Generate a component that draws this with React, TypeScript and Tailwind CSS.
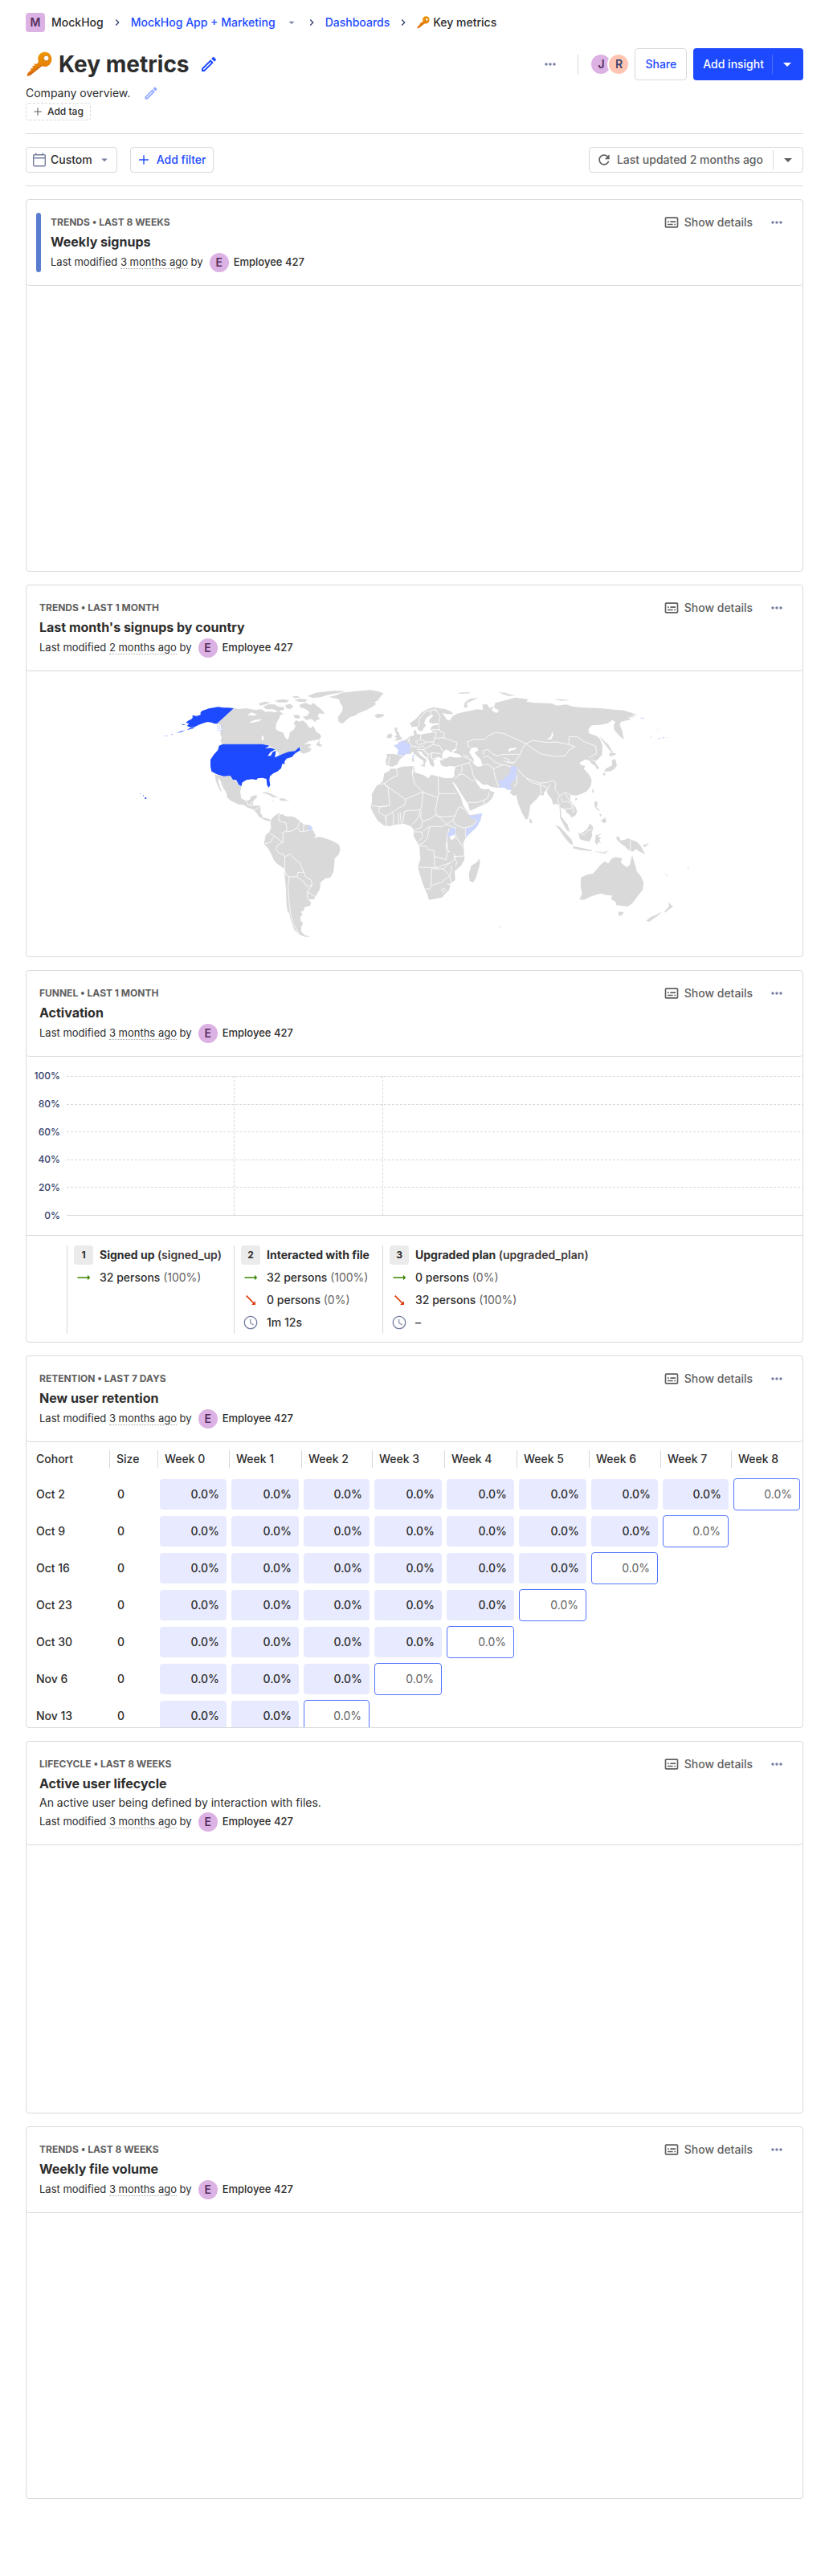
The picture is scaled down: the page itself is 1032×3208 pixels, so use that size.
import type { ReactNode } from "react";

type GlyphProps = { d: string; className?: string };

function Glyph({ d, className = "size-5" }: GlyphProps) {
  return (
    <svg viewBox="0 0 24 24" fill="currentColor" aria-hidden="true" className={`shrink-0 ${className}`}>
      <path d={d} />
    </svg>
  );
}

const PENCIL =
  "M14.06 9l.94.94L5.92 19H5v-.92L14.06 9m3.6-6c-.25 0-.51.1-.7.29l-1.83 1.83 3.75 3.75 1.83-1.83c.39-.39.39-1.04 0-1.41l-2.34-2.34c-.2-.2-.45-.29-.71-.29m-3.6 3.19L3 17.25V21h3.75L17.81 9.94l-3.75-3.75z";
const SUBTITLES =
  "M20 4H4c-1.100 0-2 .9-2 2v12c0 1.100.9 2 2 2h16c1.100 0 2-.9 2-2V6c0-1.100-.9-2-2-2zm0 14H4V6h16v12zM6 10h2v2H6zm0 4h8v2H6zm10 0h2v2h-2zm-6-4h8v2h-8z";
const DOTS =
  "M6 10c-1.100 0-2 .9-2 2s.9 2 2 2 2-.9 2-2-.9-2-2-2zm12 0c-1.100 0-2 .9-2 2s.9 2 2 2 2-.9 2-2-.9-2-2-2zm-6 0c-1.100 0-2 .9-2 2s.9 2 2 2 2-.9 2-2-.9-2-2-2z";
const CARET = "M7 10l5 5 5-5z";
const CHEVRON = "M10 6L8.590 7.410 13.170 12l-4.580 4.590L10 18l6-6z";
const PLUS = "M19 12.800h-6.200V19h-1.600v-6.200H5v-1.600h6.200V5h1.600v6.200H19z";
const REFRESH =
  "M17.650 6.350C16.200 4.900 14.210 4 12 4c-4.420 0-7.990 3.580-7.990 8s3.570 8 7.990 8c3.730 0 6.840-2.550 7.730-6h-2.080c-.82 2.330-3.040 4-5.650 4-3.310 0-6-2.690-6-6s2.690-6 6-6c1.660 0 3.140.69 4.220 1.780L13 11h7V4l-2.350 2.350z";
const ARROW = "M22 12l-4-4v3H3v2h15v3z";
const CLOCK =
  "M11.990 2C6.470 2 2 6.480 2 12s4.470 10 9.990 10C17.520 22 22 17.520 22 12S17.520 2 11.990 2zM12 20.400c-4.640 0-8.400-3.760-8.400-8.400S7.360 3.600 12 3.600s8.400 3.760 8.400 8.400-3.760 8.400-8.400 8.400zm.3-13.400h-1.300v6l5 3.100.7-1.100-4.400-2.700z";

function Key({ className }: { className: string }) {
  return (
    <svg viewBox="0 0 96 96" aria-hidden="true" className={`shrink-0 ${className}`}>
      <defs>
        <linearGradient id="key-body" x1="0" y1="0" x2="0" y2="1">
          <stop offset="0" stopColor="#ee9700" />
          <stop offset="1" stopColor="#e07010" />
        </linearGradient>
      </defs>
      <path
        fillRule="evenodd"
        fill="url(#key-body)"
        d="M69 2C53 2 42 14 43 29c0 4 1 7 2 10L38 47l-9-1 1 8-8 0 2 9-8 0 0 8-6 4L3 84l-1 9 11-3L57 55c3 1 6 2 10 2 15 0 27-12 27-28C94 14 84 2 69 2zM74 16a9.500 9.500 0 1 1 0 19 9.500 9.500 0 0 1 0-19z"
      />
      <path d="M13 90L57 55l-3-3L8 88z" fill="#c96a12" />
      <circle cx="74" cy="25.500" r="10" fill="none" stroke="#b96a1a" strokeWidth="2" />
    </svg>
  );
}

function CalendarIcon() {
  return (
    <svg viewBox="0 0 16 18" fill="none" stroke="#747ea1" strokeWidth="1.400" aria-hidden="true" className="h-[18px] w-4 shrink-0">
      <rect x="0.7" y="2.700" width="14.600" height="14" rx="1.200" />
      <path d="M1 6.700h14M3.700 0.500v2.500M12.300 0.500v2.500" />
    </svg>
  );
}

function Avatar({ letter, className }: { letter: string; className: string }) {
  return (
    <span className={`inline-flex size-6 shrink-0 items-center justify-center text-sm font-semibold ${className}`}>{letter}</span>
  );
}

function Breadcrumbs() {
  const chevron = <Glyph d={CHEVRON} className="mx-[9px] size-4 text-[#35416b]" />;
  return (
    <nav aria-label="Breadcrumb" className="flex h-[56px] items-center text-sm leading-5 font-medium">
      <Avatar letter="M" className="mr-2 rounded-sm bg-[#dcb1e3] text-[#572e5e]" />
      <span>MockHog</span>
      {chevron}
      <a href="#project" className="text-[#1d4aff]">
        MockHog App + Marketing
      </a>
      <button type="button" aria-label="Switch project" className="ml-3 text-[#747ea1]">
        <Glyph d={CARET} className="size-4" />
      </button>
      {chevron}
      <a href="#dashboards" className="text-[#1d4aff]">
        Dashboards
      </a>
      {chevron}
      <Key className="mr-1 size-4" />
      <span>Key metrics</span>
    </nav>
  );
}

function PageHeader() {
  return (
    <header className="border-b border-[#d9d9d9] pb-4">
      <div className="flex h-12 items-center justify-between">
        <div className="flex items-center">
          <h1 className="flex items-center gap-2 text-[28px] leading-8 font-bold">
            <Key className="ml-px size-8" />
            Key metrics
          </h1>
          <button type="button" aria-label="Edit name" className="ml-3 text-[#1d4aff]">
            <Glyph d={PENCIL} className="size-6" />
          </button>
        </div>
        <div className="flex items-center text-sm font-medium">
          <button type="button" aria-label="More options" className="px-3 text-[#747ea1]">
            <Glyph d={DOTS} />
          </button>
          <span className="mr-4 ml-3 h-6 w-px bg-[#d9d9d9]" />
          <Avatar letter="J" className="rounded-full bg-[#dcb1e3] text-[#572e5e]" />
          <Avatar letter="R" className="-ml-0.5 rounded-full bg-[#ffc4b2] text-[#35416b] ring-2 ring-white" />
          <button type="button" className="ml-2 h-10 rounded border border-[#d9d9d9] px-3 text-[#1d4aff]">
            Share
          </button>
          <div className="ml-2 flex h-10 items-center rounded bg-[#1d4aff] text-white">
            <button type="button" className="h-10 pr-2.5 pl-3">
              Add insight
            </button>
            <span className="h-6 w-px bg-white/20" />
            <button type="button" aria-label="More ways to add" className="pr-2 pl-1.5">
              <Glyph d={CARET} className="size-6" />
            </button>
          </div>
        </div>
      </div>
      <div className="flex h-6 items-center text-sm">
        <p>Company overview.</p>
        <button type="button" aria-label="Edit description" className="ml-4 text-[#8ea5ff]">
          <Glyph d={PENCIL} />
        </button>
      </div>
      <button type="button" className="flex h-[22px] items-center rounded border border-dashed border-[#d9d9d9] px-2 text-xs font-medium">
        <Glyph d={PLUS} className="-ml-0.5 mr-1 size-4 text-[#5f5f5f]" />
        Add tag
      </button>
    </header>
  );
}

function FilterBar() {
  return (
    <div className="flex items-center justify-between border-b border-[#d9d9d9] py-4 text-sm font-medium">
      <div className="flex gap-4">
        <button type="button" className="flex h-8 items-center rounded border border-[#d9d9d9] pr-1.5 pl-2">
          <CalendarIcon />
          <span className="mx-1.5">Custom</span>
          <Glyph d={CARET} className="size-[18px] text-[#747ea1]" />
        </button>
        <button type="button" className="flex h-8 items-center gap-1.5 rounded border border-[#d9d9d9] px-1.5 pr-2 text-[#1d4aff]">
          <Glyph d={PLUS} />
          Add filter
        </button>
      </div>
      <div className="flex h-8 items-center rounded border border-[#d9d9d9] text-[#5f5f5f]">
        <button type="button" className="flex items-center gap-1.5 pr-3 pl-2">
          <Glyph d={REFRESH} />
          Last updated 2 months ago
        </button>
        <span className="h-6 w-px bg-[#d9d9d9]" />
        <button type="button" aria-label="Refresh settings" className="px-1.5">
          <Glyph d={CARET} className="size-6" />
        </button>
      </div>
    </div>
  );
}

type CardProps = {
  meta: string;
  title: string;
  when?: string;
  description?: string;
  ribbon?: boolean;
  children?: ReactNode;
};

function InsightCard({ meta, title, when = "3 months ago", description, ribbon, children }: CardProps) {
  return (
    <section className="flex h-[464px] flex-col overflow-hidden rounded border border-[#d9d9d9]">
      <div className={`flex shrink-0 rounded-b border-b border-[#d9d9d9] py-4 pr-4 ${ribbon ? "pl-3" : "pl-4"}`}>
        {ribbon && <span className="mr-3 w-1.5 rounded bg-[#597dce]" />}
        <div className="min-w-0 flex-1">
          <div className="flex h-6 items-center justify-between">
            <h5 className="text-xs font-bold text-[#5f5f5f] uppercase">{meta}</h5>
            <div className="flex items-center text-[#5f5f5f]">
              <button type="button" className="flex items-center gap-1.5 text-sm font-medium">
                <Glyph d={SUBTITLES} />
                Show details
              </button>
              <button type="button" aria-label={`More actions for ${title}`} className="mr-1.5 ml-5 text-[#747ea1]">
                <Glyph d={DOTS} />
              </button>
            </div>
          </div>
          <h4 className="mb-0.5 text-base leading-6 font-bold">{title}</h4>
          {description && <p className="mb-0.5 text-sm leading-5">{description}</p>}
          <div className="flex h-6 items-center text-[13px]">
            <span>
              Last modified <span className="border-b border-dotted border-[#a8a8a8]">{when}</span> by
            </span>
            <Avatar letter="E" className="mr-1.5 ml-2 rounded-full bg-[#dcb1e3] text-[#572e5e]" />
            <span className="font-medium">Employee 427</span>
          </div>
        </div>
      </div>
      {children}
    </section>
  );
}

const WEST_LAND = [
  "M393 126L415 129 440 126 470 132 498 130 512 140 530 138 548 142 560 134 578 148 566 152 562 165 552 182 549 203 562 212 577 216 585 235 592 244 599 236 603 215 617 206 624 192 616 182 626 170 636 176 650 172 662 180 672 195 680 200 690 192 702 215 714 222 720 232 712 242 690 246 672 250 655 262 674 258 684 264 668 272 684 276 664 290 640 292 645 278 640 271 622 286 597 289 575 299 560 303 562 294 546 278 525 265 500 260 350 260 343 246 348 236 342 220 350 205 344 190 330 184z",
  "M322 373L330 376 355 380 380 378 390 393 400 395 412 412 422 417 417 438 421 462 438 472 453 468 458 455 478 450 480 458 466 472 463 490 488 490 494 494 492 514 503 535 520 538 532 544 530 549 514 545 504 542 486 530 478 516 464 503 445 497 430 487 412 486 385 473 368 460 366 444 352 420 344 398 336 386 335 398 347 437 343 436 330 408 325 392z",
  "M498 443L512 439 530 444 545 452 560 460 538 458 518 446z",
  "M564 463L580 463 592 469 604 471 580 472 566 471z",
  "M536 470L545 472 538 474z",
  "M529 545L543 530 556 520 566 518 563 527 572 521 590 530 612 530 626 536 640 548 655 560 672 562 686 572 690 585 700 603 690 612 712 606 735 612 762 622 786 636 791 655 785 672 770 688 768 715 765 738 754 758 735 762 717 776 715 800 704 820 692 840 674 840 668 836 682 852 678 864 656 870 656 882 643 886 650 896 642 906 642 918 652 930 644 944 646 962 660 974 680 980 660 980 640 972 620 955 608 925 600 890 594 886 590 860 588 800 584 760 582 726 556 708 544 695 530 665 520 648 506 632 512 600 526 588 532 572z",
  "M748 84L775 78 795 68 850 62 905 58 935 64 952 70 940 84 932 96 918 104 925 110 908 122 885 134 860 144 845 154 826 160 812 172 800 183 785 178 782 160 790 148 798 138 800 120 790 106 786 92 765 88z",
  "M918 153L928 148 948 147 956 154 944 160 928 163z",
  "M640 112L662 106 680 114 690 106 704 118 722 132 733 148 712 145 706 156 716 166 698 172 700 180 682 166 664 170 650 158 668 154 676 140 660 128 640 122z",
  "M614 152L630 150 642 156 636 166 622 162z",
  "M502 122L520 112 545 112 560 120 582 122 580 132 556 136 540 130 515 130z",
  "M485 108L510 101 530 104 512 112 492 116z",
  "M545 98L575 92 600 96 590 104 560 104z",
  "M585 114L605 110 616 120 604 130 590 126z",
  "M620 96L640 90 668 94 660 102 635 102z",
  "M668 80L700 68 735 64 770 61 812 62 780 70 745 76 720 84 690 88z",
  "M610 82L632 80 640 86 620 88z",
  "M700 262L716 244 712 258 722 262 720 270 706 266z",
  "M645 292L662 286 684 278 676 288 655 296z",
];

const BLUE_WEST = [
  "M393 126L330 184 318 183 312 180 296 177 282 181 262 188 250 194 232 198 218 192 226 184 214 180 222 173 236 166 240 160 238 152 254 155 270 150 268 144 274 136 300 127 335 121 355 124 372 124z",
  "M250 194L240 202 218 208 226 202zM210 208L200 214 178 219 190 214zM168 221l-12 5 6-1zM148 228l-14 4 6-3zM198 184l16 4-10 1z",
  "M338 266L352 260 500 260 527 266 510 276 530 274 548 280 530 290 520 304 531 304 538 290 550 284 549 296 546 310 574 298 597 289 622 286 638 271 642 283 622 295 610 308 590 314 582 326 584 334 574 334 570 350 556 362 540 370 528 380 526 394 529 414 523 423 517 412 515 390 500 386 482 388 478 394 462 391 440 394 424 404 422 417 412 412 402 394 390 393 380 378 355 380 330 373 310 362 306 344 306 318 318 300 334 282z",
  "M60 460L66 459 67 464 62 466zM42 444L46 445 43 447zM53 451L58 453 55 455z",
];

const WEST_BORDERS =
  "M560 524L562 548 588 554 592 585 576 590 577 628 545 604 526 592M545 604L528 628 510 632M577 626L556 638 550 655 563 668 583 675 583 726M592 588L612 584 632 570 640 550M632 572L640 586 652 588M655 560L652 586 690 580M583 682L603 670 622 690 640 704 655 738 632 740 630 755 600 756 590 750 582 726M655 738L660 755 682 768 685 786 665 791 652 772 630 757M685 786L668 812 698 830M668 812L668 838M600 756L596 790 600 850 604 888 614 930 636 966M440 472L444 486 462 490M462 474L450 490M494 494L470 506M503 535L500 540M530 540L530 552";

const EAST_LAND = [
  "M150 182L168 170 180 158 194 142 215 130 240 122 262 126 285 130 308 140 312 148 292 148 272 144 282 158 296 180 286 180 282 166 300 172 310 156 328 146 350 140 375 136 400 130 424 132 422 112 440 112 448 126 462 118 456 134 474 144 484 136 464 122 470 106 500 98 545 86 592 92 586 102 622 106 680 108 700 116 735 112 760 120 800 124 860 126 900 130 950 134 975 142 1000 152 976 154 990 160 966 160 976 168 940 176 934 186 944 212 950 242 936 232 914 208 912 190 918 176 906 170 890 182 862 188 830 190 818 204 820 220 845 228 860 240 870 265 868 300 852 318 842 324 848 336 858 350 850 355 842 340 830 334 820 320 804 318 785 330 790 338 806 342 800 352 822 376 830 396 826 416 812 436 790 446 772 452 750 450 750 470 768 492 776 512 768 528 754 535 748 524 736 516 728 502 714 498 716 530 728 545 740 560 748 588 736 582 722 556 712 536 710 500 702 482 686 486 680 465 666 448 660 432 652 440 650 452 636 450 624 466 600 488 597 515 592 538 584 543 572 522 556 485 548 450 538 454 524 442 530 432 512 430 505 422 480 423 455 420 440 412 422 412 410 400 395 388 400 405 415 425 430 430 445 426 450 434 467 440 458 462 440 480 408 494 375 510 368 484 345 450 326 418 303 390 318 380 316 365 322 344 300 342 285 345 268 340 262 322 278 318 258 308 242 318 238 322 243 340 236 345 226 336 220 315 205 304 192 288 178 286 192 302 216 320 210 324 208 334 200 336 202 324 186 312 168 298 160 288 152 297 135 298 128 305 112 318 104 336 84 345 76 342 62 338 60 318 66 308 62 298 86 296 105 300 108 282 90 264 105 262 108 253 126 247 140 240 150 230 166 228 164 210 174 208 176 222 192 224 216 220 230 218 236 210 228 206 230 196 240 190 260 188 256 182 234 184 222 178 224 168 238 154 232 150 214 160 208 170 204 182 212 190 202 200 196 212 182 208 178 194 158 196z",
  "M92 198L106 200 102 210 110 216 114 232 122 236 118 244 92 248 102 238 94 232 102 226 96 214z",
  "M64 238L68 224 80 220 86 228 80 238z",
  "M78 352L100 352 122 344 165 342 170 352 168 365 200 375 220 388 230 374 255 380 284 388 300 386 316 392 310 404 326 432 342 460 350 490 368 514 374 526 420 518 414 545 400 570 360 608 350 630 352 655 355 690 342 714 318 735 320 768 303 780 298 804 270 833 222 842 216 822 198 780 180 720 190 690 186 640 165 605 165 580 155 567 130 558 100 560 75 566 55 565 30 545 15 520 4 497 10 470 8 448 25 418 50 398 55 370 74 360z",
  "M410 688L413 705 398 758 388 776 374 772 371 745 380 714 400 702z",
  "M893 300L902 290 922 296 914 302 900 306z",
  "M905 320L918 316 924 340 914 354 898 362 876 362 884 350 906 340z",
  "M870 368L882 368 878 380z",
  "M860 230L876 248 892 262 906 286 914 290 900 288 880 262 866 244z",
  "M834 426L838 430 836 444 831 438z",
  "M766 465L776 461 776 468 770 471z",
  "M841 474L850 474 852 490 846 494 856 504 864 512 848 504 840 492z",
  "M862 548L872 540 882 534 884 552 874 556 868 548z",
  "M858 520L868 522 862 532z",
  "M834 524L824 540 828 534z",
  "M598 536L608 546 606 556 598 554z",
  "M694 562L712 570 732 592 756 618 760 638 746 630 728 608 710 582z",
  "M758 642L776 644 804 650 832 656 828 660 790 656 762 650z",
  "M836 660L858 662 880 662 860 666z",
  "M862 670L886 660 898 655 880 668z",
  "M780 592L796 590 812 578 824 556 836 572 830 590 832 602 822 624 806 622 786 616z",
  "M845 600L872 594 852 604 866 612 858 616 864 632 854 624 850 638 842 626z",
  "M918 606L934 608 936 620 952 618 966 612 1000 626 1012 640 1030 672 1010 662 994 652 984 662 968 656 954 642 940 632 928 622z",
  "M1018 640L1036 632 1044 630 1030 644z",
  "M790 758L812 748 834 744 850 726 862 712 878 698 892 706 902 690 918 682 944 686 938 702 960 720 972 712 976 692 981 676 990 704 998 734 1014 755 1024 778 1020 804 1000 830 984 852 966 866 944 864 922 862 918 848 902 840 906 826 886 824 862 818 830 828 800 842 784 840 794 818 788 790z",
  "M928 886L950 888 944 898 932 904z",
  "M1033 920L1050 906 1070 898 1092 886 1076 902 1044 924z",
  "M1102 884L1118 868 1118 848 1126 862 1134 866 1116 880 1104 890z",
  "M352 122L356 104 376 90 406 88 382 98 362 108 368 120 360 124z",
  "M482 66L505 68 525 74 545 78 520 80 500 74z",
  "M690 92L715 92 750 96 715 98z",
  "M330 68L370 66 378 70 340 72z",
  "M188 338L208 336 206 346z",
  "M158 312L166 312 166 326 160 326z",
  "M1102 742L1116 754 1110 752zM1186 724L1194 722 1190 728z",
  "M484 938L494 944 486 944z",
];

const SEAS = [
  "M270 304L276 288 286 280 296 284 302 290 318 286 312 292 334 298 347 310 318 310 300 306 284 314 272 314z",
  "M306 284L328 274 322 284 312 287z",
  "M372 290L382 274 402 272 406 284 392 292 404 306 416 318 422 342 404 344 388 334 390 318 380 302z",
  "M518 284L522 276 550 274 546 280 526 284 524 290z",
  "M664 242L678 232 682 212 686 226 680 240 668 244z",
  "M302 600L318 598 320 610 308 618 301 614z",
  "M286 622L292 640 290 652 300 664 296 664 286 650z",
  "M314 664L320 690 316 686z",
];

const EAST_BORDERS =
  "M100 352L106 376 75 392 54 408 26 410M54 408L134 466 200 438 168 408 160 372 166 352M158 370L165 342M54 408L70 425 75 490 40 494 8 490M134 466L132 486 108 500 86 514 62 528M70 490L38 495M38 495L34 514 60 530 64 565M62 528L62 545M86 515L90 528 88 562M106 520L110 558M114 515L118 556M124 558L130 512 146 508 190 506 195 490 200 440 255 460 258 445 326 445M258 445L256 382M190 506L182 535 160 560M195 512L190 530 198 548 192 572 168 582M198 548L225 540 250 522 246 508 255 460M250 522L268 540 290 560 270 568 225 568 200 584M335 494L325 512 320 530 312 542 290 560M250 528L275 532 318 528M335 494L352 500 372 524M312 542L320 560 350 574 384 566 402 545 376 532M290 560L322 574 320 590 322 604 345 640 352 644M298 575L290 600 288 655 300 664M225 570L215 612 200 630 186 636M186 640L212 642 220 656 240 656 242 680 268 686 286 692 290 662M242 680L242 716 252 722 180 720M232 725L230 790 226 802 210 800M232 726L276 726 300 752 266 778 232 788M252 722L276 712 300 704 318 692 318 672M276 726L300 704M300 752L306 730 306 714M318 680L355 678M318 688L326 700 322 718M300 752L304 778M268 806L277 798 285 806 276 815zM166 588L196 588 198 610 184 622M360 575L359 606M290 782l8 4 4-6" +
  "M370 268L364 252 390 242 432 242 442 230 470 217 500 220 545 240 585 258 610 246 660 254 700 252 745 262 768 270 745 282 730 304 690 306 640 296 605 275 585 258M745 262L745 232 775 232 800 250 845 268 848 296 818 310M842 325L828 318M585 258L570 278 562 300 540 330 518 330 500 322M368 268L378 276M425 300L425 284 442 280 458 296 480 304 500 298 560 298M425 310L440 304 470 328 500 340M424 338L440 334 462 350 472 394 482 418M464 352L500 336 530 346 552 352 575 378 588 388 636 406 668 402 684 394 696 406 692 430 712 452 732 440 752 450M585 388L604 402 638 414 636 404M640 414L660 420 662 436M638 416L640 448M674 410L664 432M712 452L702 464 712 500M716 460L720 476 740 474 756 486 756 500 736 500 732 512M732 446L744 466 764 492 760 516M500 310L520 318 516 326 540 330M380 318L372 330 322 344M372 330L382 350 386 372 394 390M345 342L345 362 330 378 320 390M330 376L350 372 382 396 398 394M368 478L400 478 426 470 430 484M426 470L442 462 446 440M350 308L380 318 388 330M348 300L372 308" +
  "M184 196L186 165 200 150 210 138 240 132 252 136M230 152L228 136M240 132L246 126M246 128L264 158 258 184M260 190L258 208 280 220 276 236 292 242 328 254 322 274M232 206L262 206M228 214L250 216 246 232 242 238 280 236M192 224L190 242 210 252 240 252 242 240M150 232L146 250 156 264 152 276M190 244L172 250 182 262 212 256M156 266L184 272 198 266 208 278 236 262 240 252M236 262L262 266 272 286M176 280L204 280 220 298 234 292 266 296M200 282L218 300 220 312M228 300L234 316 258 308M234 292L230 310M140 242L150 246M76 306L70 338M106 300L128 306M974 616L974 658M784 592L800 600 812 586 830 578M540 420L552 400 548 370";

const BLUE_EAST = [
  "M90 263L105 262 108 253 114 254 126 246 138 254 156 263 150 276 152 294 136 296 128 302 104 299 108 280z",
  "M161 299L166 302 165 311 160 309z",
  "M478 396L500 394 506 386 520 374 528 358 524 346 545 342 554 354 546 360 549 376 544 392 530 404 526 414 532 428 520 432 510 424 483 422 490 412z",
  "M372 524L384 528 420 518 416 540 402 568 380 588 360 608 360 576 386 566 402 545 378 536z",
  "M298 575L319 573 322 584 316 600 300 604 291 607 291 594 300 584z",
  "M1014 161L1025 161 1025 165 1014 165zM1074 204L1080 206 1076 208zM1076 238L1087 237 1082 243zM1093 235L1102 233 1098 241zM1048 232l8 1-6 3zM1106 235l6 0-4 3z",
];

function WorldMap() {
  return (
    <svg role="img" aria-label="Signups by country" viewBox="-381 -12 2898 1065" className="min-h-0 w-full flex-1">
      <g fill="#d9d9d9">
        {WEST_LAND.map((d) => (
          <path key={d} d={d} />
        ))}
      </g>
      <path
        fill="#fff"
        d="M444 152L458 142 480 148 470 154zM448 180L470 170 497 166 490 174 462 180zM498 248L497 234 505 226 504 244zM575 176L560 184 552 200 560 196zM468 130L480 134 476 126z"
      />
      <path d={WEST_BORDERS} fill="none" stroke="#fff" strokeWidth="2.500" strokeLinejoin="round" />
      <g fill="#1d4aff">
        {BLUE_WEST.map((d) => (
          <path key={d} d={d} />
        ))}
      </g>
      <path d="M332 190l4 24M340 192l4 20M347 190l2 26" fill="none" stroke="#9fb2ff" strokeWidth="2.500" strokeDasharray="5 3" />
      <path d="M672 562L679 563 686 572 680 584 671 582 674 572z" fill="#ccd6ff" />
      <g transform="translate(900 0)">
        <g fill="#d9d9d9">
          {EAST_LAND.map((d) => (
            <path key={d} d={d} />
          ))}
        </g>
        <g fill="#fff">
          {SEAS.map((d) => (
            <path key={d} d={d} />
          ))}
        </g>
        <path d={EAST_BORDERS} fill="none" stroke="#fff" strokeWidth="2.500" strokeLinejoin="round" />
        <g fill="#ccd6ff">
          {BLUE_EAST.map((d) => (
            <path key={d} d={d} />
          ))}
        </g>
      </g>
    </svg>
  );
}

const TICKS = ["100%", "80%", "60%", "40%", "20%", "0%"];
const LINES = [0, 35, 69, 104, 138];

type Step = { name: string; event?: string; converted: [string, string]; dropped?: [string, string]; time?: string };

const STEPS: Step[] = [
  { name: "Signed up", event: "(signed_up)", converted: ["32 persons", "(100%)"] },
  { name: "Interacted with file", converted: ["32 persons", "(100%)"], dropped: ["0 persons", "(0%)"], time: "1m 12s" },
  { name: "Upgraded plan", event: "(upgraded_plan)", converted: ["0 persons", "(0%)"], dropped: ["32 persons", "(100%)"], time: "–" },
];

function StepRow({ icon, children }: { icon: ReactNode; children: ReactNode }) {
  return (
    <div className="flex h-7 items-center gap-2">
      <span className="flex w-6 justify-center">{icon}</span>
      <span className="whitespace-nowrap">{children}</span>
    </div>
  );
}

function Funnel() {
  return (
    <div className="flex-1">
      <div className="flex py-4">
        <div className="flex w-[50px] flex-col justify-between pr-2 text-right text-xs leading-4 font-medium text-[#35416b]">
          {TICKS.map((tick) => (
            <span key={tick}>{tick}</span>
          ))}
        </div>
        <svg aria-hidden="true" className="my-2 h-[174px] flex-1" stroke="#d9d9d9">
          {LINES.map((y) => (
            <line key={y} x1="0" x2="100%" y1={y + 0.5} y2={y + 0.5} strokeDasharray="3 2" />
          ))}
          <line x1="208.500" x2="208.500" y1="0" y2="173" strokeDasharray="3 2" />
          <line x1="393.500" x2="393.500" y1="0" y2="173" strokeDasharray="3 2" />
          <line x1="0" x2="100%" y1="173.500" y2="173.500" />
        </svg>
      </div>
      <div className="grid h-[134px] grid-cols-[208px_185px_1fr] border-t border-[#d9d9d9] py-3 pl-[50px] text-sm font-medium">
        {STEPS.map((step, i) => (
          <div key={step.name} className="border-l border-[#d9d9d9] pl-2">
            <div className="flex h-6 items-center gap-2 font-bold whitespace-nowrap">
              <span className="flex size-6 shrink-0 items-center justify-center rounded bg-[#ebebeb] text-xs">{i + 1}</span>
              <span>
                {step.name} {step.event && <span className="font-semibold text-[#403939]">{step.event}</span>}
              </span>
            </div>
            <div className="mt-0.5">
              <StepRow icon={<Glyph d={ARROW} className="size-5 text-[#388600]" />}>
                {step.converted[0]} <span className="font-normal text-[#5f5f5f]">{step.converted[1]}</span>
              </StepRow>
              {step.dropped && (
                <StepRow icon={<Glyph d={ARROW} className="size-5 rotate-45 text-[#db3707]" />}>
                  {step.dropped[0]} <span className="font-normal text-[#5f5f5f]">{step.dropped[1]}</span>
                </StepRow>
              )}
              {step.time && <StepRow icon={<Glyph d={CLOCK} className="size-5 text-[#747ea1]" />}>{step.time}</StepRow>}
            </div>
          </div>
        ))}
      </div>
    </div>
  );
}

const COHORTS = ["Oct 2", "Oct 9", "Oct 16", "Oct 23", "Oct 30", "Nov 6", "Nov 13"];
const WEEKS = [0, 1, 2, 3, 4, 5, 6, 7, 8];
const COLUMNS = ["w-[103px]", "w-[60px]", "w-[89px]", "w-[90px]", "w-[88px]", "w-[90px]", "w-[90px]", "w-[90px]", "w-[89px]", "w-[88px]", "w-[89px]"];

function Retention() {
  return (
    <table className="w-full table-fixed text-left text-sm font-medium">
      <colgroup>
        {COLUMNS.map((width, i) => (
          <col key={i} className={width} />
        ))}
      </colgroup>
      <thead>
        <tr className="h-[42px]">
          <th scope="col" className="pl-3 font-medium">
            Cohort
          </th>
          {["Size", ...WEEKS.map((w) => `Week ${w}`)].map((label) => (
            <th key={label} scope="col" className="p-0 font-medium">
              <div className="h-[22px] border-l border-[#d9d9d9] pl-2 leading-[22px]">{label}</div>
            </th>
          ))}
        </tr>
      </thead>
      <tbody>
        {COHORTS.map((cohort, row) => (
          <tr key={cohort} className="h-[46px]">
            <th scope="row" className="pl-3 font-medium">
              {cohort}
            </th>
            <td className="pl-2.5">0</td>
            {WEEKS.map((week) => {
              const last = 8 - row;
              if (week > last) return <td key={week} />;
              return (
                <td key={week} className="px-[3px] py-0">
                  {week === last ? (
                    <div className="flex h-10 items-center justify-end rounded border border-[#5375ff] pr-[9px] font-normal text-[#5f5f5f]">0.0%</div>
                  ) : (
                    <div className="flex h-[38px] items-center justify-end rounded bg-[#e8ebff] pr-[9px]">0.0%</div>
                  )}
                </td>
              );
            })}
          </tr>
        ))}
      </tbody>
    </table>
  );
}

export default function App() {
  return (
    <div className="min-h-screen bg-white px-8 pb-24 font-['Inter',sans-serif] text-[#2d2d2d]">
      <Breadcrumbs />
      <PageHeader />
      <FilterBar />
      <main className="mt-4 flex flex-col gap-4">
        <InsightCard meta="Trends • Last 8 weeks" title="Weekly signups" ribbon />
        <InsightCard meta="Trends • Last 1 month" title="Last month's signups by country" when="2 months ago">
          <WorldMap />
        </InsightCard>
        <InsightCard meta="Funnel • Last 1 month" title="Activation">
          <Funnel />
        </InsightCard>
        <InsightCard meta="Retention • Last 7 days" title="New user retention">
          <Retention />
        </InsightCard>
        <InsightCard
          meta="Lifecycle • Last 8 weeks"
          title="Active user lifecycle"
          description="An active user being defined by interaction with files."
        />
        <InsightCard meta="Trends • Last 8 weeks" title="Weekly file volume" />
      </main>
    </div>
  );
}
